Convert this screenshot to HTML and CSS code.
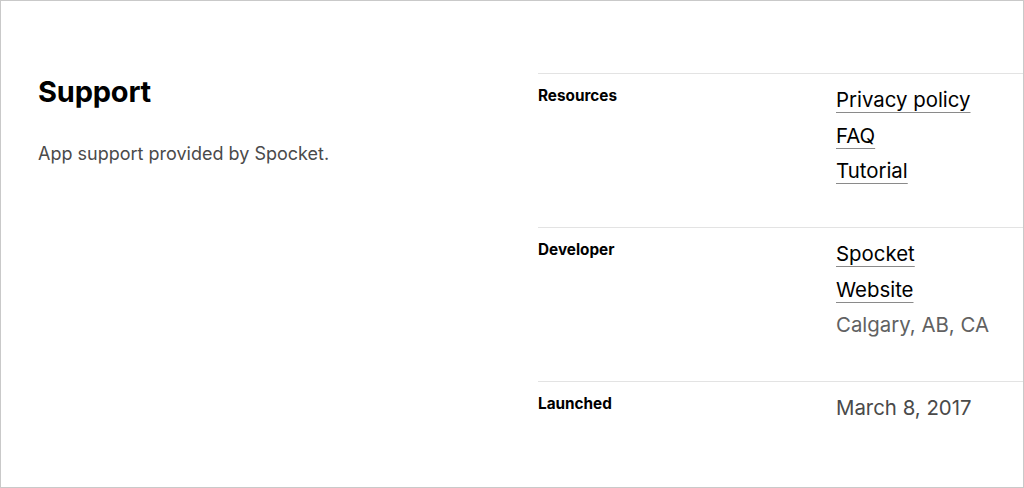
FILE: index.html
```html
<!DOCTYPE html>
<html lang="en">
<head>
<meta charset="utf-8">
<title>Support</title>
<link rel="stylesheet" href="styles.css">
</head>
<body>
<div class="page">
  <section class="intro">
    <h2 class="title">Support</h2>
    <p class="desc">App support provided by Spocket.</p>
  </section>
  <section class="details">
    <div class="row">
      <div class="label">Resources</div>
      <div class="values">
        <a class="link" href="#">Privacy policy</a>
        <a class="link" href="#">FAQ</a>
        <a class="link" href="#">Tutorial</a>
      </div>
    </div>
    <div class="row">
      <div class="label">Developer</div>
      <div class="values">
        <a class="link" href="#">Spocket</a>
        <a class="link" href="#">Website</a>
        <span class="muted">Calgary, AB, CA</span>
      </div>
    </div>
    <div class="row">
      <div class="label">Launched</div>
      <div class="values">
        <span class="plain">March 8, 2017</span>
      </div>
    </div>
  </section>
</div>
</body>
</html>
```
FILE: styles.css
```css
* { box-sizing: border-box; }
html, body { margin: 0; padding: 0; background: #fff; }
body { font-family: Inter, "Noto Sans", sans-serif; color: #000; }
.page {
  width: 1024px;
  height: 488px;
  border: 1px solid #c9c9c9;
  display: flex;
  padding: 72px 0 0 37px;
  overflow: hidden;
}
.intro { width: 500px; flex: none; }
.title {
  margin: 1px 0 0;
  font-size: 29px;
  line-height: 36px;
  font-weight: 700;
  letter-spacing: -0.2px;
}
.desc {
  margin: 30px 0 0;
  font-size: 18px;
  line-height: 27px;
  color: #4a4a4a;
}
.details { flex: 1; }
.row {
  display: grid;
  grid-template-columns: 298px 1fr;
  border-top: 1px solid #e3e3e3;
  padding: 12px 0 42px;
}
.row:last-child { padding-bottom: 0; }
.label {
  font-size: 15.3px;
  line-height: 20px;
  font-weight: 700;
}
.values {
  display: flex;
  flex-direction: column;
  align-items: flex-start;
  gap: 7.5px;
  font-size: 20.4px;
  line-height: 28px;
}
.link {
  color: #000;
  text-decoration: underline;
  text-decoration-color: #8a8a8a;
  text-decoration-thickness: 1px;
  text-underline-offset: 5px;
  text-decoration-skip-ink: none;
}
.muted { color: #616161; }
.plain { color: #4a4a4a; }
```
